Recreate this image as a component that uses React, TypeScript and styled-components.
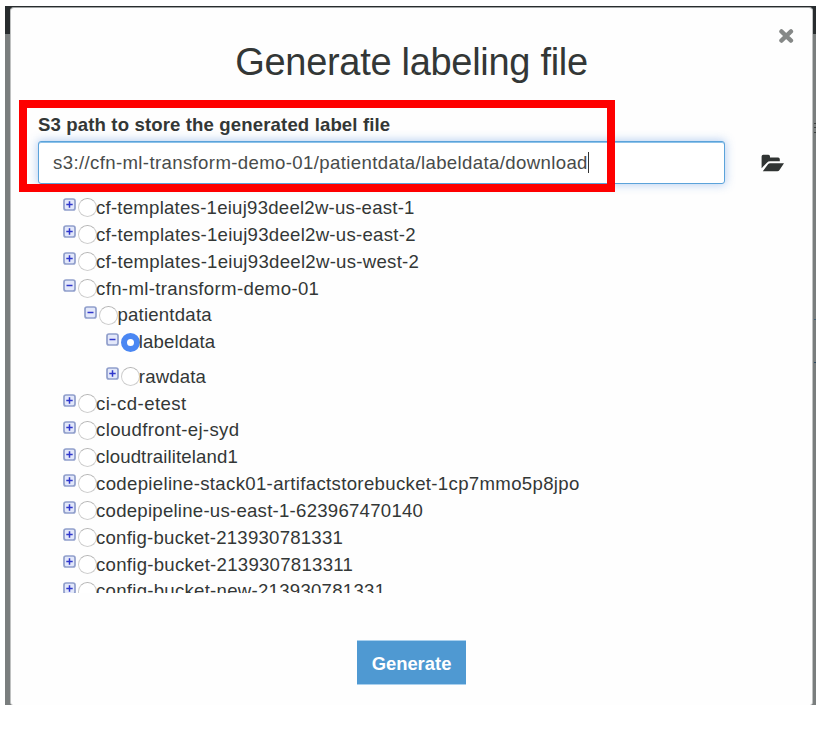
import React from "react";
import styled, { createGlobalStyle } from "styled-components";

const GlobalStyle = createGlobalStyle`
  *, *::before, *::after { box-sizing: border-box; }
  html, body { margin: 0; background: #fff; overflow: hidden; }
  body { font-family: "Liberation Sans", Arial, Helvetica, sans-serif; color: #333736; }
`;

const Page = styled.div`
  width: 822px;
  height: 732px;
  padding: 6px 6px 27px 5px;
  background: #fff;
`;

const Backdrop = styled.div`
  position: relative;
  width: 811px;
  height: 699px;
  padding: 1px 3px 0 5px;
  background: linear-gradient(#282c2e 28px, #7a7e7e 28px);
`;

const BackdropMark = styled.span<{ $top: number; $color: string }>`
  position: absolute;
  right: 0;
  top: ${(p) => p.$top}px;
  width: 2px;
  height: 1px;
  background: ${(p) => p.$color};
`;

const Dialog = styled.section`
  position: relative;
  height: 698px;
  display: flex;
  flex-direction: column;
  background: #fefefe;
  border: 1px solid #bfc1c1;
  border-top-color: #a0a3a3;
  border-bottom: 0;
  border-radius: 4px 4px 3px 3px;
`;

const Header = styled.header`
  position: relative;
  height: 92px;
  padding-top: 32px;
  text-align: center;
`;

const Title = styled.h1`
  margin: 0;
  font-size: 38px;
  font-weight: 400;
  line-height: 44px;
  letter-spacing: -0.3px;
  white-space: nowrap;
`;

const CloseButton = styled.button`
  position: absolute;
  right: 18px;
  top: 20px;
  width: 16px;
  height: 16px;
  padding: 0;
  border: 0;
  background: none;
  color: #858887;
  svg { display: block; }
`;

const Field = styled.div`
  padding: 13px 0 0 27px;
`;

const Label = styled.label`
  display: block;
  height: 28px;
  line-height: 23px;
  font-size: 18.6px;
  font-weight: 700;
  letter-spacing: 0.125px;
  white-space: nowrap;
`;

const InputRow = styled.div`
  display: flex;
  align-items: center;
`;

const PathInput = styled.div`
  display: flex;
  align-items: center;
  width: 687px;
  height: 43px;
  padding-left: 14px;
  font-size: 18.6px;
  letter-spacing: 0.37px;
  color: #484b4a;
  white-space: nowrap;
  background: #fff;
  border: 1px solid #5ba3da;
  border-radius: 3px;
  box-shadow: 0 0 10px 1px rgba(91, 145, 225, 0.42), inset 0 1px 0 #8dc2e9;
`;

const Caret = styled.span`
  width: 1px;
  height: 21px;
  margin-left: 0.5px;
  background: #333;
`;

const BrowseButton = styled.button`
  margin-left: 36px;
  padding: 0;
  border: 0;
  background: none;
  color: #303433;
  svg { display: block; }
`;

const Highlight = styled.div`
  position: absolute;
  left: 8px;
  top: 92px;
  width: 596px;
  height: 92px;
  border: 8px solid #fe0000;
  pointer-events: none;
`;

const Tree = styled.div`
  height: 399px;
  margin-top: 10px;
  overflow: hidden;
`;

const TreeRow = styled.div<{ $level: number; $gap: number }>`
  display: flex;
  align-items: flex-start;
  height: 26.85px;
  margin-top: ${(p) => p.$gap}px;
  padding-left: ${(p) => 52 + p.$level * 21.4}px;
`;

const Toggle = styled.svg`
  flex: none;
  width: 13px;
  height: 13px;
  margin-top: 4.4px;
`;

const Radio = styled.span<{ $checked: boolean }>`
  flex: none;
  width: 19px;
  height: 19px;
  margin: 4.4px 0 0 2px;
  border-radius: 50%;
  border: ${(p) => (p.$checked ? "6px solid #4a87f3" : "1px solid #cecece")};
  border-top-color: ${(p) => (p.$checked ? "#4a87f3" : "#b4b4b4")};
  background: #fff;
`;

const NodeName = styled.span<{ $tracking: number }>`
  margin-left: -1px;
  font-size: 18.6px;
  line-height: 27.6px;
  letter-spacing: ${(p) => p.$tracking}px;
  white-space: nowrap;
`;

const Footer = styled.footer`
  display: flex;
  justify-content: center;
  padding: 47px 0 0 0;
`;

const GenerateButton = styled.button`
  width: 109px;
  height: 45px;
  padding: 2px 0 0;
  border: 1px solid #a9d0ee;
  border-width: 1px 0;
  background: #4f99d2;
  color: #fff;
  font: 700 18.4px "Liberation Sans", Arial, sans-serif;
`;

type TreeNode = {
  name: string;
  tracking: number;
  level?: number;
  open?: boolean;
  checked?: boolean;
  gap?: number;
};

const nodes: TreeNode[] = [
  { name: "cf-templates-1eiuj93deel2w-us-east-1", tracking: 0.24 },
  { name: "cf-templates-1eiuj93deel2w-us-east-2", tracking: 0.27 },
  { name: "cf-templates-1eiuj93deel2w-us-west-2", tracking: 0.28 },
  { name: "cfn-ml-transform-demo-01", tracking: 0.35, open: true },
  { name: "patientdata", tracking: 0.22, level: 1, open: true },
  { name: "labeldata", tracking: 0.11, level: 2, open: true, checked: true },
  { name: "rawdata", tracking: 0.15, level: 2, gap: 7.6 },
  { name: "ci-cd-etest", tracking: 0.45 },
  { name: "cloudfront-ej-syd", tracking: 0.35 },
  { name: "cloudtrailiteland1", tracking: 0.13 },
  { name: "codepieline-stack01-artifactstorebucket-1cp7mmo5p8jpo", tracking: 0.33 },
  { name: "codepipeline-us-east-1-623967470140", tracking: 0.25 },
  { name: "config-bucket-213930781331", tracking: 0.24 },
  { name: "config-bucket-2139307813311", tracking: 0.27 },
  { name: "config-bucket-new-213930781331", tracking: 0.27 },
];

const ToggleIcon = ({ open }: { open: boolean }) => (
  <Toggle viewBox="0 0 13 13">
    <rect x="1" y="1" width="11" height="11" rx="2" fill="#e3e8fa" stroke="#909ecb" strokeWidth="1.7" />
    <path d={open ? "M3.5 6.5h6" : "M3.3 6.5h6.4M6.5 3.3v6.4"} stroke="#3038cc" strokeWidth="1.5" />
  </Toggle>
);

export default function App() {
  return (
    <Page>
      <GlobalStyle />
      <Backdrop>
        <Dialog>
          <Header>
            <Title>Generate labeling file</Title>
            <CloseButton aria-label="Close">
              <svg width="16" height="16" viewBox="0 0 16 16">
                <path d="M3.4 3.4l9.6 9.2M13 3.4l-9.6 9.2" stroke="currentColor" strokeWidth="4.3" strokeLinecap="round" />
              </svg>
            </CloseButton>
          </Header>
          <Field>
            <Label>S3 path to store the generated label file</Label>
            <InputRow>
              <PathInput>
                <span>s3://cfn-ml-transform-demo-01/patientdata/labeldata/download</span>
                <Caret />
              </PathInput>
              <BrowseButton aria-label="Browse">
                <svg width="24" height="18" viewBox="0 0 24 18" fill="currentColor">
                  <path d="M.6 14.2V2.4Q.6.8 2.2.8h5.2q1.6 0 1.6 1.6v1.2h8.1q1.7 0 1.7 1.7v2H9.1q-1.9 0-3.2 1.4z" />
                  <path d="M1.8 17.2 7 10.3Q7.8 9.2 9.2 9.2H23L18.5 15.9Q17.7 17.2 16.3 17.2z" />
                </svg>
              </BrowseButton>
            </InputRow>
          </Field>
          <Tree>
            {nodes.map((n) => (
              <TreeRow key={n.name} $level={n.level ?? 0} $gap={n.gap ?? 0}>
                <ToggleIcon open={!!n.open} />
                <Radio $checked={!!n.checked} />
                <NodeName $tracking={n.tracking}>{n.name}</NodeName>
              </TreeRow>
            ))}
          </Tree>
          <Footer>
            <GenerateButton>Generate</GenerateButton>
          </Footer>
          <Highlight />
        </Dialog>
        <BackdropMark $top={117} $color="#3c4040" />
        <BackdropMark $top={121} $color="#3c4040" />
        <BackdropMark $top={126} $color="#3c4040" />
        <BackdropMark $top={313} $color="#3f5c73" />
        <BackdropMark $top={356} $color="#2c4a63" />
      </Backdrop>
    </Page>
  );
}
